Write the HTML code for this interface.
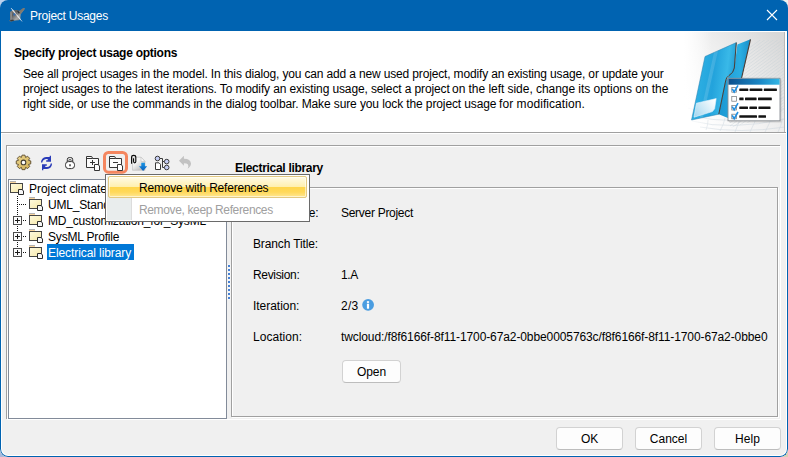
<!DOCTYPE html>
<html>
<head>
<meta charset="utf-8">
<title>Project Usages</title>
<style>
html,body{margin:0;padding:0;}
body{width:788px;height:457px;overflow:hidden;background:#f0f0f0;font-family:"Liberation Sans",sans-serif;font-size:12px;color:#000;position:relative;}
.abs{position:absolute;}
.t{position:absolute;white-space:nowrap;line-height:16px;height:16px;}
.corner{position:absolute;width:10px;height:10px;}
#win{position:absolute;left:0;top:0;width:788px;height:457px;box-sizing:border-box;background:#f0f0f0;overflow:hidden;border-radius:8px;}
#frame{position:absolute;left:0;top:31px;width:788px;height:426px;box-sizing:border-box;border:1px solid #0063b1;border-top:none;border-radius:0 0 8px 8px;box-shadow:inset 0 0 0 1px #ffffff;pointer-events:none;}
#titlebar{position:absolute;left:0;top:0;width:788px;height:31px;background:#0063b1;}
#header{position:absolute;left:1px;top:31px;width:786px;height:101px;background:#fff;}
.btn{position:absolute;box-sizing:border-box;height:23px;background:#fdfdfd;border:1px solid #d2d2d2;border-bottom-color:#bdbdbd;border-radius:4px;text-align:center;line-height:23px;}
svg{position:absolute;overflow:visible;}
</style>
</head>
<body>
<div class="corner" style="left:0;top:0;background:#b9d1ef;"></div>
<div class="corner" style="left:778px;top:0;background:#f0f0ee;"></div>
<div class="corner" style="left:0;top:447px;background:#a9badb;"></div>
<div class="corner" style="left:778px;top:447px;background:#d9d0b3;"></div>
<div id="win">
  <div id="titlebar"></div>
    <div id="header"></div>


  <!-- header image -->
  <svg id="himg" style="left:684px;top:31px;" width="101" height="101" viewBox="684 31 101 101">
    <defs>
      <linearGradient id="hbg" gradientUnits="userSpaceOnUse" x1="692" y1="115" x2="785" y2="45"><stop offset="0" stop-color="#ffffff"/><stop offset="0.4" stop-color="#f3f3f3"/><stop offset="0.8" stop-color="#e2e2e2"/><stop offset="1" stop-color="#d8d8d8"/></linearGradient>
      <clipPath id="hclip"><path d="M730,40 L785,40 L785,112 L730,128 Z"/></clipPath>
      <linearGradient id="hfade" gradientUnits="userSpaceOnUse" x1="684" y1="0" x2="712" y2="0"><stop offset="0" stop-color="#ffffff" stop-opacity="1"/><stop offset="1" stop-color="#ffffff" stop-opacity="0"/></linearGradient>
      <linearGradient id="ff" gradientUnits="userSpaceOnUse" x1="694" y1="80" x2="736" y2="85"><stop offset="0" stop-color="#2fb2e4"/><stop offset="0.45" stop-color="#23a3dc"/><stop offset="0.75" stop-color="#39b9e8"/><stop offset="1" stop-color="#1b95d0"/></linearGradient>
      <linearGradient id="fb" gradientUnits="userSpaceOnUse" x1="722" y1="80" x2="752" y2="80"><stop offset="0" stop-color="#1d9ad4"/><stop offset="0.6" stop-color="#2aaee2"/><stop offset="1" stop-color="#168ac6"/></linearGradient>
      <linearGradient id="clh" gradientUnits="userSpaceOnUse" x1="728" y1="0" x2="780" y2="0"><stop offset="0" stop-color="#0c4f8c"/><stop offset="0.6" stop-color="#1a86c4"/><stop offset="1" stop-color="#35b8e6"/></linearGradient>
      <linearGradient id="lab" gradientUnits="userSpaceOnUse" x1="695" y1="116" x2="715" y2="100"><stop offset="0" stop-color="#a6d8f0"/><stop offset="1" stop-color="#ffffff"/></linearGradient>
    </defs>
    <rect x="684" y="31" width="101" height="101" fill="url(#hbg)"/>
    <g stroke="#c3d0d6" stroke-width="0.7" fill="none" opacity="0.55" clip-path="url(#hclip)">
      <path d="M730,62.0 L785,21.9"/><path d="M730,65.2 L785,25.1"/><path d="M730,68.4 L785,28.3"/><path d="M730,71.6 L785,31.4"/><path d="M730,74.8 L785,34.6"/><path d="M730,78.0 L785,37.9"/><path d="M730,81.2 L785,41.1"/><path d="M730,84.4 L785,44.3"/><path d="M730,87.6 L785,47.4"/><path d="M730,90.8 L785,50.6"/><path d="M730,94.0 L785,53.9"/><path d="M730,97.2 L785,57.1"/><path d="M730,100.4 L785,60.3"/><path d="M730,103.6 L785,63.4"/><path d="M730,106.8 L785,66.7"/><path d="M730,110.0 L785,69.8"/><path d="M730,113.2 L785,73.1"/><path d="M730,116.4 L785,76.2"/><path d="M730,119.6 L785,79.4"/><path d="M730,122.8 L785,82.7"/><path d="M730,126.0 L785,85.8"/><path d="M730,129.2 L785,89.0"/><path d="M730,132.4 L785,92.2"/><path d="M730,135.6 L785,95.5"/><path d="M730,138.8 L785,98.7"/><path d="M730,142.0 L785,101.8"/><path d="M730,145.2 L785,105.0"/><path d="M730,148.4 L785,108.2"/><path d="M730,151.6 L785,111.5"/><path d="M730,154.8 L785,114.7"/><path d="M730,158.0 L785,117.8"/><path d="M730,161.2 L785,121.0"/><path d="M730,164.4 L785,124.2"/><path d="M730,167.6 L785,127.5"/>
    </g>
    <g stroke="#c5d0da" stroke-width="0.6" fill="none" opacity="0.7">
      <path d="M692,121 Q730,131 785,119"/><path d="M690,115 Q735,128 785,108"/><path d="M700,127 Q740,134 785,127"/><path d="M688,108 Q735,124 785,97"/>
      <path d="M735,132 Q740,122 741,112"/><path d="M750,132 Q756,122 757,112"/><path d="M765,132 Q770,124 772,114"/><path d="M720,131 Q724,124 725,118"/><path d="M778,132 Q781,126 783,118"/><path d="M706,130 Q708,125 708,120"/>
    </g>
    <rect x="684" y="31" width="30" height="101" fill="url(#hfade)"/>
    <rect x="784" y="31" width="1" height="101" fill="#b9b9b9"/>
    <rect x="700" y="31" width="85" height="1" fill="#c4c4c4" opacity="0.8"/>
    <!-- back folder -->
    <path d="M737.4,44.6 L750.5,39.3 L733.5,113 L728.5,118.2 L718.8,114.2 L725.6,81 L734.3,68 Z" fill="url(#fb)"/>
    <path d="M750.5,39.3 L733.5,113" stroke="#4a3c34" stroke-width="1.1" fill="none"/>
    <!-- front folder -->
    <path d="M705,56.5 L736.3,42.6 L734.3,68 Q733.5,73 729,75.5 Q726,77.5 725.6,81 L718.8,114.2 L691.5,120 Z" fill="url(#ff)" stroke="#2b7fae" stroke-width="0.5"/>
    <path d="M736.3,42.6 L734.3,68 Q733.5,73 729,75.5 Q726,77.5 725.6,81 L718.8,114.2" fill="none" stroke="#4a4038" stroke-width="1"/>
    <path d="M714,52.5 L718,50.8 L703,117 L699.5,118 Z" fill="#ffffff" opacity="0.13"/>
    <!-- label -->
    <path d="M696.4,103.2 L716.2,98.6 L714.6,108.8 L712.4,111.6 L694,117.2 Z" fill="url(#lab)" stroke="#e8f4fb" stroke-width="0.6"/>
    <!-- checklist -->
    <rect x="729" y="79.5" width="52.5" height="43" fill="#000" opacity="0.12"/>
    <rect x="728" y="78.3" width="52" height="42.5" fill="#ffffff" stroke="#8a8f94" stroke-width="0.9"/>
    <rect x="728.4" y="78.7" width="51.2" height="6" fill="url(#clh)"/>
    <g fill="#ffffff" stroke="#6f7478" stroke-width="0.7">
      <rect x="731.8" y="87.6" width="4.6" height="4.6"/><rect x="731.8" y="96.6" width="4.6" height="4.6"/><rect x="731.8" y="105.4" width="4.6" height="4.6"/><rect x="731.8" y="114.2" width="4.6" height="4.6"/>
    </g>
    <g fill="none" stroke="#1d8ee2" stroke-width="1.6">
      <path d="M732.2,88.8 L734.2,92 L738,85.4"/><path d="M732.2,106.6 L734.2,109.8 L738,103.2"/><path d="M732.2,115.4 L734.2,118.6 L738,112"/>
    </g>
    <g fill="#141414">
      <rect x="739.3" y="88.5" width="9.0" height="2.6" rx="0.5"/>
      <rect x="749.6" y="88.5" width="12.8" height="2.6" rx="0.5"/>
      <rect x="763.8" y="88.5" width="13.1" height="2.6" rx="0.5"/>
      <rect x="739.3" y="97.6" width="4.3" height="2.6" rx="0.5"/>
      <rect x="745" y="97.6" width="11.6" height="2.6" rx="0.5"/>
      <rect x="758" y="97.6" width="13.8" height="2.6" rx="0.5"/>
      <rect x="739.3" y="106.4" width="8.7" height="2.6" rx="0.5"/>
      <rect x="749.4" y="106.4" width="7.6" height="2.6" rx="0.5"/>
      <rect x="758.4" y="106.4" width="12.1" height="2.6" rx="0.5"/>
      <rect x="739.3" y="115.2" width="17.7" height="2.6" rx="0.5"/>
      <rect x="758.4" y="115.2" width="7.6" height="2.6" rx="0.5"/>
    </g>
  </svg>
  <!-- title icon -->
  <svg style="left:8px;top:7px;" width="18" height="16" viewBox="8 7 18 16">
    <defs><linearGradient id="tig" gradientUnits="userSpaceOnUse" x1="10" y1="10" x2="21" y2="21"><stop offset="0" stop-color="#8a8a8a"/><stop offset="0.35" stop-color="#5c5c5c"/><stop offset="0.7" stop-color="#a8a8a8"/><stop offset="1" stop-color="#6a6a6a"/></linearGradient></defs>
    <path d="M10.3,11.4 L13,10.2 L17,9.9 L19.6,10.8 L23,8.3 L24.7,7.9 L24.3,9.6 L20.6,14.2 L20.4,18.6 L19,20.2 L15,20.6 L11,21.6 L9.2,21 L10.1,19.4 L10,14 Z" fill="url(#tig)"/>
    <path d="M19.6,10.8 L23,8.3 L24.7,7.9 L24.3,9.6 L20.6,14.2 L18.5,13 Z" fill="#7d7468" opacity="0.8"/>
    <path d="M18,10.5 L19.8,12.8 L18.8,13.8 L17.2,11.5 Z" fill="#2a3038"/>
    <path d="M10.3,12 L12,12.5 L12,19 L10.2,19.8 Z" fill="#8a8a8a"/>
    <path d="M13.4,13.2 L15.4,13.4 L15.2,15.6 L13.6,15.4 Z" fill="#2e6fc0"/>
    <path d="M9.6,20.6 L13,19.6 L14.5,20.4 L11,21.5 Z" fill="#3a3a3a"/>
    <path d="M11,8 L22,21.4" stroke="#e8ecf2" stroke-width="0.8" fill="none" opacity="0.9"/>
    <path d="M12.2,9.6 L15,13" stroke="#ffffff" stroke-width="1.3" fill="none" opacity="0.6"/><path d="M17,15.2 L20.5,19.6" stroke="#ffffff" stroke-width="1.2" fill="none" opacity="0.5"/>
  </svg>
  <!-- close X -->
  <svg style="left:766px;top:9px;" width="12" height="12" viewBox="0 0 12 12">
    <path d="M1,1 L11,11 M11,1 L1,11" stroke="#ffffff" stroke-width="1.1" fill="none"/>
  </svg>
  <div class="abs" style="left:1px;top:132px;width:785px;height:1px;background:#a0a0a0;z-index:5;"></div>
  <div class="abs" style="left:1px;top:133px;width:786px;height:1px;background:#fff;"></div>

  <div class="t" id="ttl" style="left:30px;top:8px;color:#fff;letter-spacing:-0.241px;">Project Usages</div>
  <div class="t" id="hd" style="left:14px;top:45px;font-weight:bold;letter-spacing:-0.26px;">Specify project usage options</div>
  <div class="t" id="l1" style="left:23px;top:66px;letter-spacing:-0.153px;">See all project usages in the model. In this dialog, you can add a new used project, modify an existing usage, or update your</div>
  <div class="t" id="l2" style="left:23px;top:81px;letter-spacing:-0.125px;">project usages to the latest iterations. To modify an existing usage, select a project</div>
  <div class="t" id="l2b" style="left:452px;top:81px;letter-spacing:-0.042px;">on the left side, change its options on the</div>
  <div class="t" id="l3" style="left:23px;top:96px;letter-spacing:-0.112px;">right side, or use the commands in the dialog toolbar. Make sure you lock the project usage</div>
  <div class="t" id="l3b" style="left:499px;top:96px;letter-spacing:0.07px;">for modification.</div>

  <!-- outer panel -->
  <div class="abs" style="left:7px;top:146px;width:774px;height:274px;box-sizing:border-box;border:1px solid #fff;"></div>
  <div class="abs" style="left:6px;top:145px;width:774px;height:274px;box-sizing:border-box;border-top:1px solid #a0a0a0;border-left:1px solid #a0a0a0;"></div>
  <!-- tree panel -->
  <div class="abs" style="left:8px;top:179px;width:219px;height:240px;box-sizing:border-box;border:1px solid #828b99;background:#fff;"></div>
  <!-- right inner panel -->
  <div class="abs" style="left:232px;top:188px;width:547px;height:230px;box-sizing:border-box;border:1px solid #fff;"></div>
  <div class="abs" style="left:231px;top:187px;width:547px;height:230px;box-sizing:border-box;border:1px solid #a0a0a0;"></div>

  <!-- toolbar icons -->
  <svg id="tb" style="left:0;top:145px;" width="200" height="34" viewBox="0 145 200 34">
    <defs>
      <linearGradient id="gearg" x1="0" y1="0" x2="1" y2="1"><stop offset="0" stop-color="#ecd68e"/><stop offset="1" stop-color="#cfae56"/></linearGradient>
      <linearGradient id="docg" gradientUnits="userSpaceOnUse" x1="133" y1="157" x2="145" y2="171"><stop offset="0" stop-color="#ffffff"/><stop offset="0.35" stop-color="#f4f4f4"/><stop offset="1" stop-color="#a8a8a8"/></linearGradient>
      <linearGradient id="arrg" gradientUnits="userSpaceOnUse" x1="0" y1="162" x2="0" y2="171"><stop offset="0" stop-color="#1a9ae6"/><stop offset="1" stop-color="#0a60c0"/></linearGradient>
    </defs>
    <!-- gear -->
    <g transform="translate(23.5,162.4)">
      <path id="gearp" d="M-2.05,-4.99 L-1.47,-7.25 L1.47,-7.25 L2.05,-4.99 L2.08,-4.98 L4.09,-6.17 L6.17,-4.09 L4.98,-2.08 L4.99,-2.05 L7.25,-1.47 L7.25,1.47 L4.99,2.05 L4.98,2.08 L6.17,4.09 L4.09,6.17 L2.08,4.98 L2.05,4.99 L1.47,7.25 L-1.47,7.25 L-2.05,4.99 L-2.08,4.98 L-4.09,6.17 L-6.17,4.09 L-4.98,2.08 L-4.99,2.05 L-7.25,1.47 L-7.25,-1.47 L-4.99,-2.05 L-4.98,-2.08 L-6.17,-4.09 L-4.09,-6.17 L-2.08,-4.98 Z" fill="url(#gearg)" stroke="#5a4a2a" stroke-width="0.9" stroke-linejoin="round"/>
      <circle cx="0" cy="0" r="2.3" fill="#ffffff" stroke="#3f3a30" stroke-width="1.1"/>
    </g>
    <!-- refresh -->
    <g fill="#2a3cb8" stroke="none">
      <path id="rfa" d="M40.9,162.6 C41.1,159.4 43,157.2 46,157 L49.7,157 L49.7,155.8 L51,155.8 L51,161.7 L46.2,161.7 L46.2,160.3 L47.7,160.3 L47.7,158.9 L46,158.9 C43.8,159.1 42.6,160.6 42.3,162.6 Z"/>
      <path d="M40.9,162.6 C41.1,159.4 43,157.2 46,157 L49.7,157 L49.7,155.8 L51,155.8 L51,161.7 L46.2,161.7 L46.2,160.3 L47.7,160.3 L47.7,158.9 L46,158.9 C43.8,159.1 42.6,160.6 42.3,162.6 Z" transform="rotate(180 46.5 163)"/>
    </g>
    <!-- lock -->
    <g fill="none" stroke="#2e2e2e" stroke-width="1">
      <path d="M67.3,162 L67.3,159.6 Q67.3,157.5 69.4,157.5 L70.6,157.5 Q72.7,157.5 72.7,159.6 L72.7,162"/>
      <path d="M68.9,161.6 L68.9,160.2 Q68.9,159.4 69.7,159.4 L70.3,159.4 Q71.1,159.4 71.1,160.2 L71.1,161.6" stroke-width="0.8"/>
      <rect x="65.5" y="161.6" width="9" height="7" rx="3" fill="#ffffff"/>
      <path d="M70,164.2 L70,166.3" stroke-width="1.4"/>
    </g>
    <!-- folder plus -->
    <g fill="#fbfbfb" stroke="#353535" stroke-width="1">
      <path d="M86.5,167.5 L86.5,156.5 L91.7,156.5 L92.7,158.5 L98.5,158.5 L98.5,167.5 Z"/>
      <path d="M86.5,158.5 L92.7,158.5" />
      <path d="M90,162.5 L95,162.5 M92.5,160 L92.5,165" fill="none"/>
      <path d="M94.5,164.5 L98,164.5 L99.5,166 L99.5,170.5 L94.5,170.5 Z" fill="#ffffff"/>
    </g>
    <!-- highlighted button -->
    <rect x="104.5" y="152.5" width="22" height="19.7" rx="4" fill="none" stroke="#f4865f" stroke-width="3"/>
    <!-- folder minus -->
    <g fill="#fbfbfb" stroke="#353535" stroke-width="1">
      <path d="M109.5,167.5 L109.5,156.5 L114.7,156.5 L115.7,158.5 L121.5,158.5 L121.5,167.5 Z"/>
      <path d="M109.5,158.5 L115.7,158.5"/>
      <path d="M113,162.5 L118,162.5" fill="none"/>
      <path d="M117.5,164.5 L121,164.5 L122.5,166 L122.5,170.5 L117.5,170.5 Z" fill="#ffffff"/>
    </g>
    <!-- doc w/ clip + arrow -->
    <path d="M132.5,157.2 L141,157.2 L145,161.4 L145,170.3 L132.5,170.3 Z" fill="url(#docg)" stroke="#c4c4c4" stroke-width="0.7"/>
    <path d="M141,157.2 L141,161.4 L145,161.4 Z" fill="#fbfbfb" stroke="#bcbcbc" stroke-width="0.6"/>
    <path d="M131.6,163.7 L131.6,157.2 Q131.6,155.3 133.7,155.3 Q135.8,155.3 135.8,157.2 L135.8,161.6 Q135.8,162.8 134.7,162.8 Q133.6,162.8 133.6,161.6 L133.6,158.2" fill="none" stroke="#0c0c0c" stroke-width="1.15"/>
    <path d="M141.3,162.8 L144.9,162.8 L144.9,166.3 L147.2,166.3 L143.1,170.9 L139,166.3 L141.3,166.3 Z" fill="url(#arrg)"/>
    <!-- tree icon -->
    <g stroke="#3a3a3a" stroke-width="1" fill="none">
      <path d="M160,158.5 L162.5,158.5 L162.5,167.5 L164.5,167.5 M162.5,161.5 L164.5,161.5"/>
      <circle cx="157.5" cy="158.5" r="2.3" fill="#c5cdf4"/>
      <circle cx="166.7" cy="161.6" r="2.3" fill="#c5cdf4"/>
      <circle cx="166.7" cy="167.5" r="2.3" fill="#c5cdf4"/>
      <path d="M155.5,162.8 L159,162.8 L160.5,164.3 L160.5,169.5 L155.5,169.5 Z" fill="#ffffff"/>
    </g>
    <!-- undo -->
    <path d="M179,160.8 L183.9,155.8 L183.9,158.7 Q190.6,158.6 191,163.6 Q191,166.6 187.6,168.8 Q189,166.4 188,164.6 Q187,163.2 183.9,163.2 L183.9,165.8 Z" fill="#c2c2c2"/>
  </svg>
  <div class="t" id="el" style="left:235px;top:160px;font-weight:bold;letter-spacing:-0.3px;">Electrical library</div>

  <!-- tree rows -->
  <div class="t" id="tr0" style="left:29px;top:181px;letter-spacing:-0.05px;">Project climate</div>
  <div class="t" id="tr1" style="left:48px;top:197px;letter-spacing:-0.18px;">UML_Standard</div>
  <div class="t" id="tr2" style="left:48px;top:213px;letter-spacing:-0.182px;">MD_customization_for_SysML</div>
  <div class="t" id="tr3" style="left:48px;top:229px;letter-spacing:-0.175px;">SysML Profile</div>
  <div class="abs" style="left:47px;top:244px;width:87px;height:16px;background:#0078d7;"></div>
  <div class="t" id="tr4" style="left:48px;top:245px;color:#fff;letter-spacing:-0.083px;">Electrical library</div>


  <!-- tree graphics -->
  <svg id="treeg" style="left:8px;top:179px;" width="100" height="90" viewBox="8 179 100 90">
    <defs><linearGradient id="fold" x1="0" y1="0" x2="1" y2="1"><stop offset="0" stop-color="#fffbe0"/><stop offset="1" stop-color="#f6e7a6"/></linearGradient></defs>
    <g stroke="#111" stroke-width="1" fill="none" stroke-dasharray="1,1">
      <path d="M17.5,196 L17.5,215"/><path d="M17.5,226 L17.5,231"/><path d="M17.5,242 L17.5,247"/>
      <path d="M19,204.5 L26,204.5"/>
      <path d="M23,220.5 L26,220.5"/><path d="M23,236.5 L26,236.5"/><path d="M23,252.5 L26,252.5"/>
    </g>
<g transform="translate(9,180)">
      <rect x="1" y="1" width="6" height="1" fill="#b4b4b4"/><rect x="1" y="2" width="6" height="1" fill="#fad59c"/>
      <rect x="1.5" y="3.5" width="12" height="9" fill="url(#fold)" stroke="#454545" stroke-width="1"/>
      <path d="M9.5,9.5 L13,9.5 L14.5,11 L14.5,14.5 L9.5,14.5 Z" fill="#f6f6f6" stroke="#2c2c2c" stroke-width="1"/>
    </g><g transform="translate(28,196)">
      <rect x="1" y="1" width="6" height="1" fill="#b4b4b4"/><rect x="1" y="2" width="6" height="1" fill="#fad59c"/>
      <rect x="1.5" y="3.5" width="12" height="9" fill="url(#fold)" stroke="#454545" stroke-width="1"/>
      <path d="M9.5,9.5 L13,9.5 L14.5,11 L14.5,14.5 L9.5,14.5 Z" fill="#f6f6f6" stroke="#2c2c2c" stroke-width="1"/>
    </g><g transform="translate(28,212)">
      <rect x="1" y="1" width="6" height="1" fill="#b4b4b4"/><rect x="1" y="2" width="6" height="1" fill="#fad59c"/>
      <rect x="1.5" y="3.5" width="12" height="9" fill="url(#fold)" stroke="#454545" stroke-width="1"/>
      <path d="M9.5,9.5 L13,9.5 L14.5,11 L14.5,14.5 L9.5,14.5 Z" fill="#f6f6f6" stroke="#2c2c2c" stroke-width="1"/>
    </g><g transform="translate(28,228)">
      <rect x="1" y="1" width="6" height="1" fill="#b4b4b4"/><rect x="1" y="2" width="6" height="1" fill="#fad59c"/>
      <rect x="1.5" y="3.5" width="12" height="9" fill="url(#fold)" stroke="#454545" stroke-width="1"/>
      <path d="M9.5,9.5 L13,9.5 L14.5,11 L14.5,14.5 L9.5,14.5 Z" fill="#f6f6f6" stroke="#2c2c2c" stroke-width="1"/>
    </g><g transform="translate(28,244)">
      <rect x="1" y="1" width="6" height="1" fill="#b4b4b4"/><rect x="1" y="2" width="6" height="1" fill="#fad59c"/>
      <rect x="1.5" y="3.5" width="12" height="9" fill="url(#fold)" stroke="#454545" stroke-width="1"/>
      <path d="M9.5,9.5 L13,9.5 L14.5,11 L14.5,14.5 L9.5,14.5 Z" fill="#f6f6f6" stroke="#2c2c2c" stroke-width="1"/>
    </g><rect x="13.5" y="216.5" width="8" height="8" fill="#fbfbfb" stroke="#4c4c4c" stroke-width="1"/>
      <path d="M15,220.5 L20,220.5 M17.5,218 L17.5,223" stroke="#1c1c1c" stroke-width="1" fill="none"/><rect x="13.5" y="232.5" width="8" height="8" fill="#fbfbfb" stroke="#4c4c4c" stroke-width="1"/>
      <path d="M15,236.5 L20,236.5 M17.5,234 L17.5,239" stroke="#1c1c1c" stroke-width="1" fill="none"/><rect x="13.5" y="248.5" width="8" height="8" fill="#fbfbfb" stroke="#4c4c4c" stroke-width="1"/>
      <path d="M15,252.5 L20,252.5 M17.5,250 L17.5,255" stroke="#1c1c1c" stroke-width="1" fill="none"/>
  </svg>
  <!-- props -->
  <div class="t" id="p0" style="left:278.5px;width:40px;text-align:right;top:205px;letter-spacing:-0.1px;">Type:</div>
  <div class="t" id="v0" style="left:341px;top:205px;letter-spacing:-0.288px;">Server Project</div>
  <div class="t" id="p1" style="left:253px;top:236px;letter-spacing:-0.131px;">Branch Title:</div>
  <div class="t" id="p2" style="left:253px;top:267px;letter-spacing:-0.329px;">Revision:</div>
  <div class="t" id="v2" style="left:341px;top:267px;letter-spacing:-0.333px;">1.A</div>
  <div class="t" id="p3" style="left:253px;top:298px;letter-spacing:-0.03px;">Iteration:</div>
  <div class="t" id="v3" style="left:341px;top:298px;letter-spacing:0.27px;">2/3</div>
  <div class="t" id="p4" style="left:253px;top:329px;letter-spacing:0.033px;">Location:</div>
  <div class="t" id="v4" style="left:341px;top:329px;letter-spacing:-0.099px;">twcloud:/f8f6166f-8f11-1700-67a2-0bbe0005763c/f8f6166f-8f11-1700-67a2-0bbe0</div>
  <div class="btn" id="open" style="left:342px;top:360px;width:59px;line-height:23px;letter-spacing:-0.09px;">Open</div>


  <!-- splitter grip -->
  <svg style="left:227px;top:262px;" width="4" height="42" viewBox="227 262 4 42">
    <rect x="227.5" y="264.5" width="3" height="3" fill="#fff" opacity="0.75"/><rect x="227.5" y="268.5" width="3" height="3" fill="#fff" opacity="0.75"/><rect x="227.5" y="272.5" width="3" height="3" fill="#fff" opacity="0.75"/><rect x="227.5" y="276.5" width="3" height="3" fill="#fff" opacity="0.75"/><rect x="227.5" y="280.5" width="3" height="3" fill="#fff" opacity="0.75"/><rect x="227.5" y="284.5" width="3" height="3" fill="#fff" opacity="0.75"/><rect x="227.5" y="288.5" width="3" height="3" fill="#fff" opacity="0.75"/><rect x="227.5" y="292.5" width="3" height="3" fill="#fff" opacity="0.75"/><rect x="227.5" y="296.5" width="3" height="3" fill="#fff" opacity="0.75"/>
    <rect x="228" y="265" width="2" height="2" fill="#4580d4"/><rect x="228" y="269" width="2" height="2" fill="#4580d4"/><rect x="228" y="273" width="2" height="2" fill="#4580d4"/><rect x="228" y="277" width="2" height="2" fill="#4580d4"/><rect x="228" y="281" width="2" height="2" fill="#4580d4"/><rect x="228" y="285" width="2" height="2" fill="#4580d4"/><rect x="228" y="289" width="2" height="2" fill="#4580d4"/><rect x="228" y="293" width="2" height="2" fill="#4580d4"/><rect x="228" y="297" width="2" height="2" fill="#4580d4"/>
  </svg>
  <!-- info icon -->
  <svg style="left:362px;top:299px;" width="12" height="12" viewBox="0 0 12 12">
    <circle cx="6.1" cy="5.85" r="5.9" fill="#4a9de1"/>
    <rect x="4.9" y="4.7" width="2.2" height="5" fill="#fff"/><rect x="4.9" y="2.2" width="2.2" height="1.7" fill="#fff"/>
  </svg>
  <div class="btn" id="ok" style="left:556px;top:427px;width:67px;letter-spacing:-0.27px;">OK</div>
  <div class="btn" id="cancel" style="left:635px;top:427px;width:67px;letter-spacing:0.007px;">Cancel</div>
  <div class="btn" id="help" style="left:714px;top:427px;width:67px;letter-spacing:0.127px;">Help</div>

  <!-- popup -->
  <div class="abs" id="popup" style="left:105px;top:174px;width:205px;height:48px;box-sizing:border-box;border:1px solid #6a6a6a;background:#fff;"></div>
  <div class="abs" style="left:107px;top:176px;width:24px;height:44px;background:#e9eded;"></div>
  <div class="abs" style="left:131px;top:176px;width:1px;height:44px;background:#dcdcdc;"></div>
  <div class="abs" id="mhl" style="left:108px;top:176px;width:199px;height:22px;box-sizing:border-box;border:1px solid #e2c880;border-radius:2px;box-shadow:inset 0 0 0 1px rgba(255,255,255,0.55);background:linear-gradient(to bottom,#fffbe6 0%,#fff0b0 48%,#ffd64a 50%,#ffd85a 75%,#ffe792 100%);"></div>
  <div class="t" id="m0" style="left:139px;top:180px;letter-spacing:-0.212px;">Remove with References</div>
  <div class="t" id="m1" style="left:139px;top:202px;color:#a0a0a0;letter-spacing:-0.36px;">Remove, keep References</div>
  <div id="frame"></div>
</div>
</body>
</html>
